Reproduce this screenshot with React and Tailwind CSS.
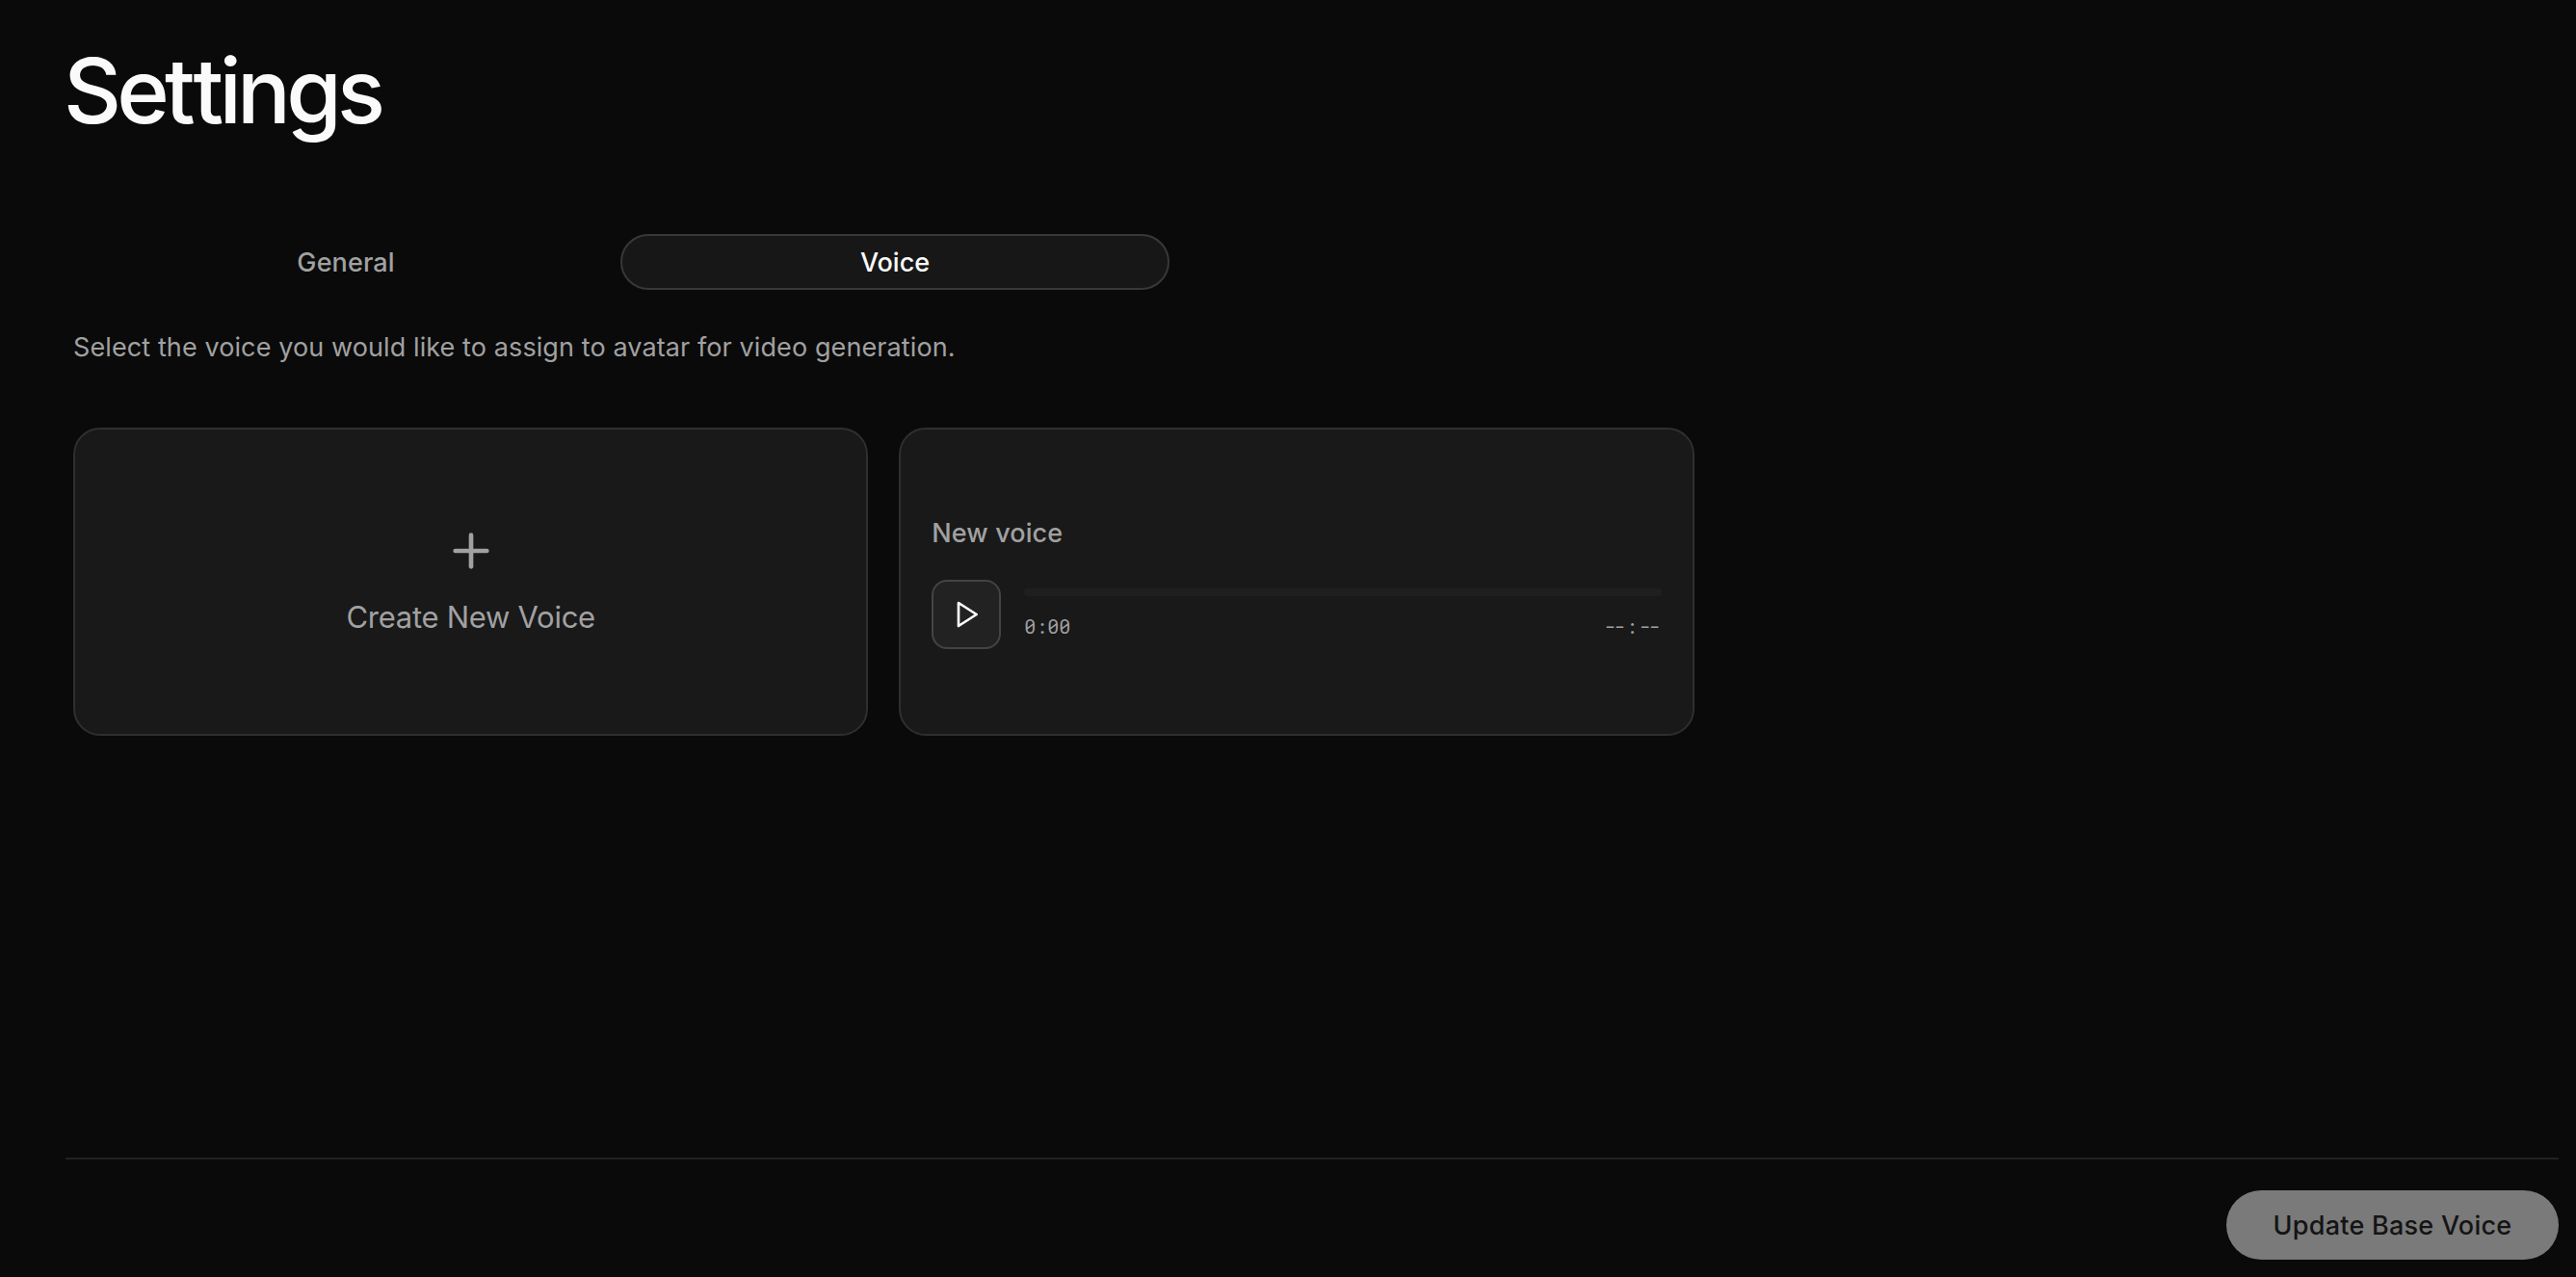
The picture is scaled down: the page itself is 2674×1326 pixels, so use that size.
import React from 'react';
import { Plus } from 'lucide-react';

const tabs = [
  { id: 'general', label: 'General', spacing: 'tracking-[0.1px]' },
  { id: 'voice', label: 'Voice', spacing: 'tracking-normal' },
];

const SettingsTabs = ({ active }) => {
  return (
    <div role="tablist" className="flex w-[1140px] ml-[6px]">
      {tabs.map((tab) => (
        <button
          key={tab.id}
          role="tab"
          aria-selected={tab.id === active}
          className={`h-[58px] flex-1 rounded-full border-2 pt-[2px] text-[27px] leading-[52px] font-medium ${tab.spacing} ${
            tab.id === active
              ? 'border-[#383838] bg-[#171717] text-[#fafafa]'
              : 'border-transparent text-[#a1a1a1]'
          }`}
        >
          {tab.label}
        </button>
      ))}
    </div>
  );
};

const Card = ({ children, className = '' }) => {
  return (
    <div
      className={`flex h-80 flex-col justify-center rounded-[28px] border-2 border-[#2f2f2f] bg-[#191919] px-8 ${className}`}
    >
      {children}
    </div>
  );
};

const PlayIcon = () => (
  <svg
    viewBox="0 0 24 24"
    className="size-8"
    fill="none"
    stroke="currentColor"
    strokeWidth="2"
    strokeLinecap="round"
    strokeLinejoin="round"
  >
    <polygon points="6 3 20 12 6 21 6 3" />
  </svg>
);

const VoiceCard = ({ name }) => {
  return (
    <Card>
      <p className="mb-7 text-[27px] leading-[40px] font-medium tracking-[0.1px] text-[#a1a1a1]">
        {name}
      </p>
      <div className="flex items-center gap-6">
        <button
          aria-label="Play"
          className="flex size-[72px] shrink-0 items-center justify-center rounded-2xl border-2 border-[#444444] bg-[#222222] text-white"
        >
          <PlayIcon />
        </button>
        <div className="min-w-0 flex-1">
          <div className="mb-4 h-2 rounded-full bg-[#1f1f1f]" />
          <div className="flex justify-between font-['Roboto_Mono','Liberation_Mono',monospace] text-[20px] leading-[30px] text-[#a1a1a1]">
            <span>0:00</span>
            <span className="mr-[3px]">
              <span className="tracking-[-2px]">--</span>
              <span className="mx-[2px]">:</span>
              <span className="tracking-[-2px]">--</span>
            </span>
          </div>
        </div>
      </div>
    </Card>
  );
};

const App = () => {
  return (
    <div className="flex h-[1326px] flex-col bg-[#0a0a0a] pt-[46px] pr-[18px] pb-[18px] pl-[68px] font-['Inter','Liberation_Sans',sans-serif]">
      <h1 className="-ml-[2px] text-[93px] leading-[96px] font-medium tracking-[-4.8px] text-[#fafafa]">
        Se<span className="tracking-[-2.2px]">t</span>tings
      </h1>

      <div className="mt-[101px]">
        <SettingsTabs active="voice" />
      </div>

      <div className="mt-10 flex-1 pr-10 pl-2">
        <p className="text-[27px] leading-[40px] tracking-[0.1px] text-[#a1a1a1]">
          Select the voice you would like to assign to avatar for video generation.
        </p>

        <div className="mt-[63px] grid grid-cols-3 gap-8">
          <Card className="items-center text-[#a1a1a1]">
            <Plus className="size-14" />
            <span className="mt-[17px] text-[31px] leading-[47px] tracking-[-0.28px]">
              Create New Voice
            </span>
          </Card>
          <VoiceCard name="New voice" />
        </div>
      </div>

      {/* Footer */}
      <div className="flex justify-end border-t-2 border-[#222222] pt-8">
        <button
          disabled
          className="h-[72px] w-[345px] rounded-full bg-[#7a7a7a] pt-[2px] text-[27px] font-medium tracking-[0.25px] text-[#141414]"
        >
          Update Base Voice
        </button>
      </div>
    </div>
  );
};

export default App;
